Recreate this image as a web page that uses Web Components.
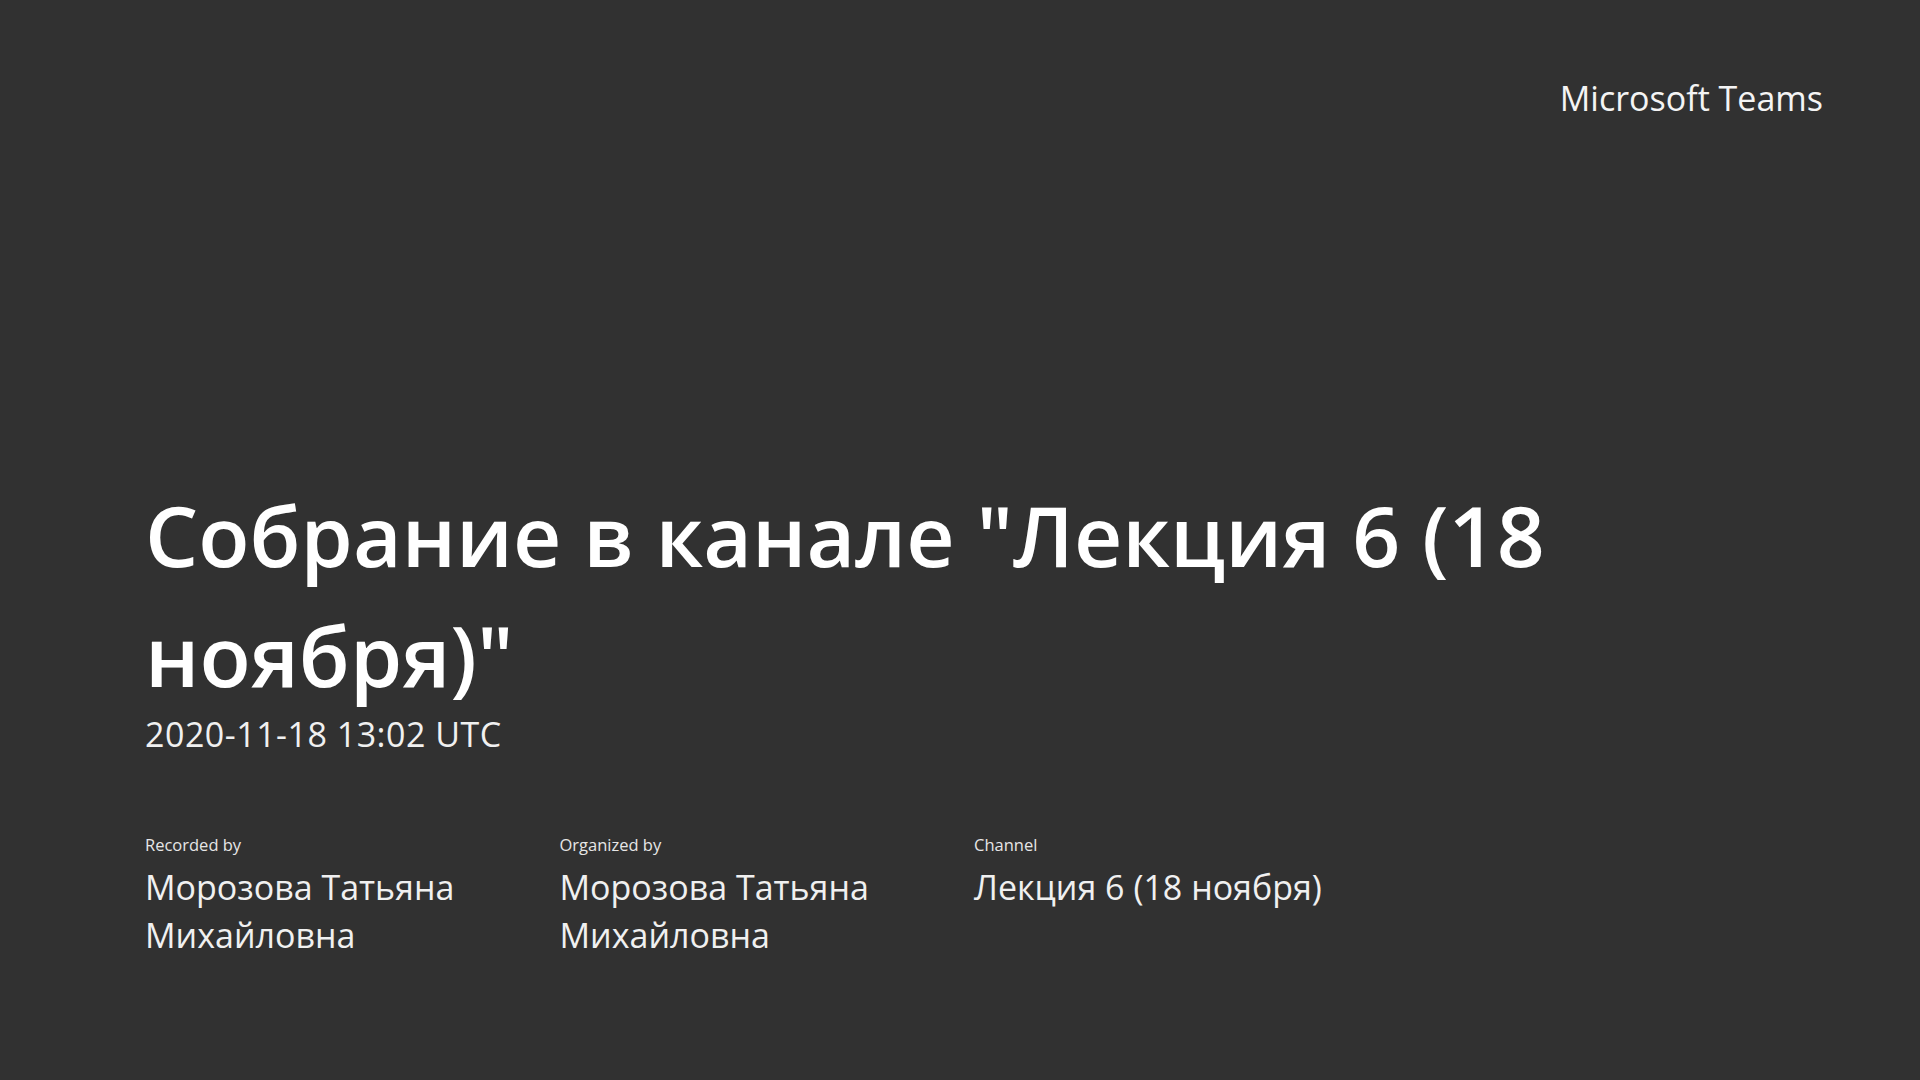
<!DOCTYPE html>
<html lang="ru">
<head>
<meta charset="utf-8">
<title>Microsoft Teams</title>
<style>
  html, body { margin: 0; height: 100%; background: #313131; }
  body { font-family: "Open Sans", "Noto Sans", sans-serif; color: #fff; }
</style>
</head>
<body>
<recording-card>
  <span slot="brand">Microsoft Teams</span>
  <span slot="title">Собрание в канале "Лекция 6 (18 ноября)"</span>
  <span slot="date">2020-11-18 13:02 UTC</span>
  <meta-item label="Recorded by">Морозова Татьяна Михайловна</meta-item>
  <meta-item label="Organized by">Морозова Татьяна Михайловна</meta-item>
  <meta-item label="Channel">Лекция 6 (18 ноября)</meta-item>
</recording-card>

<script>
class MetaItem extends HTMLElement {
  constructor() {
    super();
    this.attachShadow({ mode: "open" });
    this.shadowRoot.innerHTML = `
      <style>
        :host { display: block; width: 414.5px; box-sizing: border-box; padding-right: 50px; }
        .label { font-size: 16.5px; line-height: 24px; margin-bottom: 6px; color: #e6e6e6; }
        .value { font-size: 34px; line-height: 48px; color: #f0f0f0; }
      </style>
      <div class="label"></div>
      <div class="value"><slot></slot></div>
    `;
  }

  connectedCallback() {
    this.shadowRoot.querySelector(".label").textContent = this.getAttribute("label");
  }
}

class RecordingCard extends HTMLElement {
  constructor() {
    super();
    this.attachShadow({ mode: "open" });
    this.shadowRoot.innerHTML = `
      <style>
        :host { display: flex; flex-direction: column; box-sizing: border-box; height: 1080px; padding: 74px 97px 121px 145px; }
        .brand { align-self: flex-end; font-size: 34px; line-height: 48px; color: #f4f4f4; }
        .main { margin-top: auto; }
        .title { font-size: 84px; font-weight: 600; line-height: 120px; max-width: 1500px; }
        .date { font-size: 34px; letter-spacing: 0.5px; line-height: 38px; color: #f0f0f0; }
        .meta { display: flex; margin-top: 80px; }
      </style>
      <div class="brand"><slot name="brand"></slot></div>
      <div class="main">
        <div class="title"><slot name="title"></slot></div>
        <div class="date"><slot name="date"></slot></div>
        <div class="meta"><slot></slot></div>
      </div>
    `;
  }
}

customElements.define("meta-item", MetaItem);
customElements.define("recording-card", RecordingCard);
</script>
</body>
</html>
